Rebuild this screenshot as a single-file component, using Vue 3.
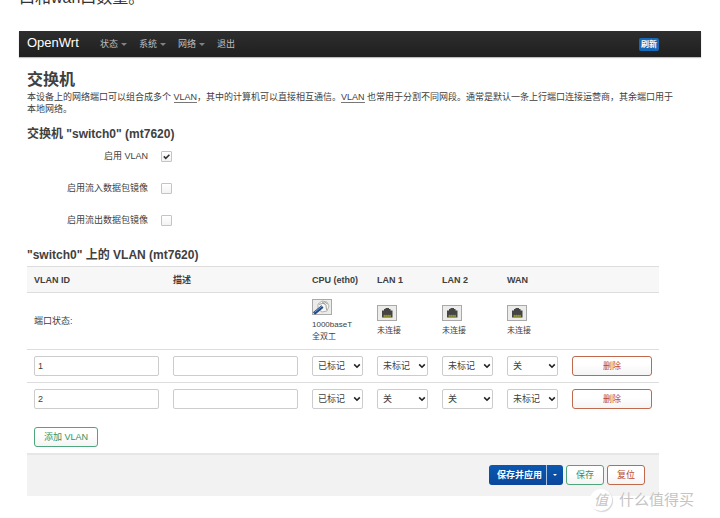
<script setup>
import { ref } from 'vue'

const menus = [
  { label: '状态', dropdown: true },
  { label: '系统', dropdown: true },
  { label: '网络', dropdown: true },
  { label: '退出', dropdown: false }
]

const options = ref([
  { id: 'enable-vlan', label: '启用 VLAN', on: true },
  { id: 'mirror-in', label: '启用流入数据包镜像', on: false },
  { id: 'mirror-out', label: '启用流出数据包镜像', on: false }
])

const ports = [
  { name: 'CPU (eth0)', up: true, lines: ['1000baseT', '全双工'] },
  { name: 'LAN 1', up: false, lines: ['未连接'] },
  { name: 'LAN 2', up: false, lines: ['未连接'] },
  { name: 'WAN', up: false, lines: ['未连接'] }
]

const states = ['关', '未标记', '已标记']

const vlans = ref([
  { id: '1', desc: '', ports: ['已标记', '未标记', '未标记', '关'] },
  { id: '2', desc: '', ports: ['已标记', '关', '关', '未标记'] }
])
</script>

<template>
  <div class="page">
    <p class="article">口和wan口数量。</p>

    <header class="topbar">
      <a class="brand" href="#">OpenWrt</a>
      <nav class="menu">
        <a v-for="m in menus" :key="m.label" href="#">
          {{ m.label }}<span v-if="m.dropdown" class="caret"></span>
        </a>
      </nav>
      <button type="button" class="refresh">刷新</button>
    </header>

    <main class="content">
      <h2>交换机</h2>
      <p class="intro">
        本设备上的网络端口可以组合成多个 <abbr>VLAN</abbr>，其中的计算机可以直接相互通信。<abbr>VLAN</abbr> 也常用于分割不同网段。通常是默认一条上行端口连接运营商，其余端口用于本地网络。
      </p>

      <h3>交换机 "switch0" (mt7620)</h3>
      <div class="options">
        <div v-for="o in options" :key="o.id" class="option">
          <label :for="o.id">{{ o.label }}</label>
          <span class="tick">
            <input :id="o.id" v-model="o.on" type="checkbox" />
            <svg v-if="o.on" viewBox="0 0 11 11" aria-hidden="true">
              <path d="M2.8 5.4 L4.8 7.4 L8.4 3.8" fill="none" stroke="#333" stroke-width="1.6" />
            </svg>
          </span>
        </div>
      </div>

      <h3>"switch0" 上的 VLAN (mt7620)</h3>
      <table>
        <colgroup>
          <col />
          <col />
          <col v-for="p in ports" :key="p.name" class="port-col" />
          <col class="action-col" />
        </colgroup>
        <thead>
          <tr>
            <th>VLAN ID</th>
            <th>描述</th>
            <th v-for="p in ports" :key="p.name">{{ p.name }}</th>
            <th></th>
          </tr>
        </thead>
        <tbody>
          <tr class="status">
            <td colspan="2">端口状态:</td>
            <td v-for="p in ports" :key="p.name">
              <svg v-if="p.up" class="port" viewBox="0 0 20 16" aria-hidden="true">
                <rect x="0.5" y="0.5" width="19" height="15" fill="#ececea" stroke="#a9a9a9" />
                <path d="M6 5 L10 2 L15 3 L17 7 L15 12 L10 13 L6 10 Z" fill="#f8f8f6" stroke="#a4a4a0" stroke-width="0.8" />
                <path d="M7 5.5 L11 4.2 L14 6 M14 6 L14.5 11 M10 3 L13 4.5 M12.5 3 L15.5 5" fill="none" stroke="#8e8e8a" stroke-width="0.8" />
                <path d="M2 14.6 L10.5 7.6" stroke="#234a86" stroke-width="3.2" />
                <path d="M2.6 13.2 L10 7.2" stroke="#6f9bd0" stroke-width="1" />
              </svg>
              <svg v-else class="port" viewBox="0 0 20 16" aria-hidden="true">
                <rect x="0.5" y="0.5" width="19" height="15" fill="#ececea" stroke="#a9a9a9" />
                <path d="M5 12.5 V5.5 H7 V4 H8.5 V3 H12 V4 H13.5 V5.5 H15.5 V12.5 Z" fill="#454545" />
                <path d="M6.5 10 H14 V12 H6.5 Z" fill="#83812c" />
                <path d="M7.5 9.8 V11.5 M9.4 9.8 V11.5 M11.3 9.8 V11.5 M13.2 9.8 V11.5" stroke="#a5a232" stroke-width="0.7" />
              </svg>
              <div v-for="l in p.lines" :key="l" class="port-text">{{ l }}</div>
            </td>
            <td></td>
          </tr>
          <tr v-for="v in vlans" :key="v.id" class="vlan">
            <td><input v-model="v.id" type="text" aria-label="VLAN ID" /></td>
            <td><input v-model="v.desc" type="text" aria-label="描述" /></td>
            <td v-for="(p, i) in ports" :key="p.name">
              <div class="select">
                <select v-model="v.ports[i]" :aria-label="p.name">
                  <option v-for="s in states" :key="s">{{ s }}</option>
                </select>
                <svg viewBox="0 0 8 6" aria-hidden="true">
                  <path d="M1.2 1.4 L4 4.2 L6.8 1.4" fill="none" stroke="#222" stroke-width="1.6" />
                </svg>
              </div>
            </td>
            <td><button type="button" class="btn negative wide">删除</button></td>
          </tr>
        </tbody>
      </table>
      <div class="add">
        <button type="button" class="btn positive">添加 VLAN</button>
      </div>

      <footer class="actions">
        <div class="split">
          <button type="button" class="apply">保存并应用</button>
          <button type="button" class="more" aria-label="▾"><span class="caret"></span></button>
        </div>
        <button type="button" class="btn positive">保存</button>
        <button type="button" class="btn negative">复位</button>
      </footer>
    </main>

    <div class="watermark">
      <span class="seal">值</span>
      <span>什么值得买</span>
    </div>
  </div>
</template>

<style>
body {
  margin: 0;
  background: #fff;
}
</style>

<style scoped>
.page {
  position: relative;
  padding: 0 19px 22px;
  overflow: hidden;
  font: 9px/12px "Liberation Sans", "Noto Sans CJK SC", sans-serif;
  color: #404040;
}

.page * {
  box-sizing: border-box;
}

.article {
  margin: -12px 0 23px;
  font-size: 16px;
  line-height: 20px;
  color: #333;
}

.topbar {
  display: flex;
  align-items: center;
  height: 26px;
  padding: 0 42px 0 8px;
  background: linear-gradient(#2e2e2e, #1f1f1f);
  box-shadow: 0 1px 1px rgba(0, 0, 0, 0.25);
}

.topbar a {
  color: #bfbfbf;
  text-decoration: none;
}

.topbar .brand {
  width: 73px;
  font-size: 13px;
  line-height: 20px;
  padding-bottom: 2px;
  color: #fff;
}

.menu {
  display: flex;
  flex: 1;
  gap: 14px;
}

.menu a {
  display: flex;
  align-items: center;
  gap: 3px;
}

.caret {
  width: 0;
  height: 0;
  border: 2px solid transparent;
  border-top-color: currentColor;
  border-bottom-width: 0;
}

.menu .caret {
  border-width: 3px 3px 0;
  margin-right: -2px;
  opacity: 0.6;
}

.refresh {
  padding: 0 2px;
  border: 0;
  border-radius: 2px;
  background: #1669b8;
  color: #fff;
  font: bold 8px/13px "Liberation Sans", "Noto Sans CJK SC", sans-serif;
}

.content {
  padding: 12px 42px 0 8px;
}

h2 {
  margin: 0;
  font-size: 16px;
  line-height: 22px;
}

.intro {
  margin: 0 -18px 0 0;
}

abbr {
  border-bottom: 1px solid #777;
}

h3 {
  margin: 10px 0 0;
  font-size: 12px;
  line-height: 18px;
}

.options {
  display: grid;
  gap: 20px;
  padding: 7px 0 10px;
}

.option {
  display: flex;
  align-items: center;
  gap: 13px;
}

.option label {
  width: 121px;
  text-align: right;
}

.tick {
  position: relative;
  display: flex;
}

.tick input {
  appearance: none;
  width: 11px;
  height: 11px;
  margin: 0;
  border: 1px solid #c4c4c4;
  border-radius: 1px;
  background: linear-gradient(#fff, #f3f3f3);
}

.tick svg {
  position: absolute;
  inset: 0;
  pointer-events: none;
}

table {
  width: 100%;
  margin-top: 2px;
  border-collapse: collapse;
  table-layout: fixed;
}

.port-col {
  width: 65px;
}

.action-col {
  width: 94px;
}

th,
td {
  padding: 0 7px;
  text-align: left;
  vertical-align: middle;
  border-top: 1px solid #ddd;
}

th {
  height: 26px;
  background: #f7f7f7;
  white-space: nowrap;
}

.status td {
  height: 57px;
}

.port {
  display: block;
  width: 20px;
  height: 16px;
  margin-bottom: 4px;
}

.port-text {
  font-size: 8px;
  line-height: 12px;
}

.vlan td {
  height: 33px;
}

.vlan input,
.select select {
  display: block;
  width: 100%;
  height: 20px;
  padding: 0 3px;
  border: 1px solid #ccc;
  border-radius: 2px;
  background: #fff;
  color: #404040;
  font: inherit;
}

.select {
  position: relative;
}

.select select {
  appearance: none;
  padding: 0 5px;
}

.select svg {
  position: absolute;
  top: 7px;
  right: 2px;
  width: 8px;
  height: 6px;
  pointer-events: none;
}

.btn {
  height: 20px;
  padding: 0 9px;
  border: 1px solid;
  border-radius: 3px;
  background: linear-gradient(#fff, #fff 40%, #f4f4f4);
  font: inherit;
}

.positive {
  border-color: #4fa67c;
  color: #2f9463;
}

.negative {
  border-color: #c0694c;
  color: #bd4a30;
}

.wide {
  display: block;
  width: 100%;
}

.add {
  padding: 11px 7px 6px;
}

.actions {
  display: flex;
  justify-content: flex-end;
  gap: 3px;
  padding: 10px 14px 11px;
  border-top: 2px solid #e6e6e6;
  background: #f2f2f2;
}

.split {
  display: flex;
}

.split button {
  height: 20px;
  border: 0;
  background: linear-gradient(#0a58b0, #0a479c);
  color: #fff;
  font: inherit;
  font-weight: bold;
}

.split .apply {
  padding: 0 4px 0 8px;
  border-radius: 3px 0 0 3px;
}

.split .more {
  display: flex;
  align-items: center;
  justify-content: center;
  width: 17px;
  padding: 0;
  border-left: 1px solid #a9c3e2;
  border-radius: 0 3px 3px 0;
}

.watermark {
  position: absolute;
  right: 26px;
  bottom: 7px;
  display: flex;
  align-items: center;
  gap: 7px;
  font-size: 15px;
  line-height: 22px;
  color: #c4c4c4;
  text-shadow: 0 0 1px #fff;
}

.seal {
  width: 22px;
  border-radius: 50%;
  background: #fff;
  box-shadow: 1px 1px 1px #d4d4d4;
  font-size: 14px;
  font-style: italic;
  text-align: center;
}
</style>
